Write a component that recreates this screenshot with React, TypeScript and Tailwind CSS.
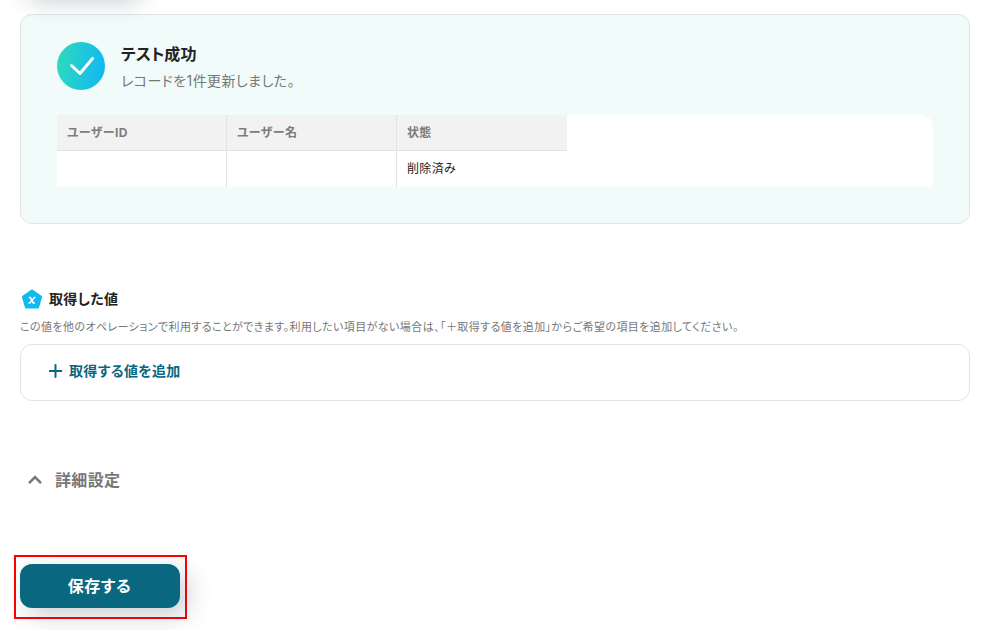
const columns = [
  { label: "ユーザーID", value: "" },
  { label: "ユーザー名", value: "" },
  { label: "状態", value: "削除済み" },
];

function SuccessIcon() {
  return (
    <svg width="48" height="48" viewBox="0 0 48 48" fill="none" className="shrink-0">
      <defs>
        <linearGradient id="success" x1="0" y1="20" x2="48" y2="28" gradientUnits="userSpaceOnUse">
          <stop stopColor="#2fd9bd" />
          <stop offset="1" stopColor="#11b8f2" />
        </linearGradient>
      </defs>
      <circle cx="24" cy="24" r="24" fill="url(#success)" />
      <path d="M14.5 23.5L23 31.5L35.5 16.5" stroke="white" strokeWidth="3" strokeLinecap="round" strokeLinejoin="round" />
    </svg>
  );
}

function ValueIcon() {
  return (
    <svg width="20" height="20" viewBox="0 0 20 20" fill="none" className="shrink-0">
      <path
        d="M10 2L18.5 8L15.6 18H4.4L1.5 8Z"
        fill="#11b9ee"
        stroke="#11b9ee"
        strokeWidth="3"
        strokeLinejoin="round"
      />
      <path d="M6.8 8.5H8.3L11.3 14H12.9" stroke="white" strokeWidth="1.7" />
      <path d="M13.5 8.5H12.4L7.8 14H6.4" stroke="white" strokeWidth="1.4" />
    </svg>
  );
}

export default function App() {
  return (
    <div className="relative h-[630px] overflow-hidden bg-white px-5 pt-3.5 font-['Inter','Noto_Sans_CJK_JP',sans-serif] tracking-[0.02em] text-[#222222] [font-feature-settings:'palt']">
      {/* Test result */}
      <section className="h-[210px] w-[950px] rounded-xl border border-[#e3e3e3] bg-[#f1fbfa] px-9 pt-[27px]">
        <div className="flex h-12 gap-4">
          <SuccessIcon />
          <div>
            <h2 className="text-base leading-6 font-bold tracking-[0.002em]">テスト成功</h2>
            <p className="mt-1 text-sm leading-[22px] tracking-[0.03em] text-[#777777]">レコードを1件更新しました。</p>
          </div>
        </div>
        <div className="mt-[25px] flex h-[72px] w-[876px] rounded-tr-xl bg-white text-xs tracking-[0.03em]">
          {columns.map((column, index) => (
            <div key={column.label} className={`w-[170px] ${index < columns.length - 1 ? "border-r border-[#e3e3e3]" : ""}`}>
              <div className="flex h-9 items-center border-b border-[#e3e3e3] bg-[#f2f2f2] px-2.5 font-bold text-[#7c7c7c]">
                {column.label}
              </div>
              <div className="flex h-9 items-center px-2.5">{column.value}</div>
            </div>
          ))}
        </div>
      </section>

      {/* Output values */}
      <section className="mt-[65px] w-[950px]">
        <div className="flex h-5 items-center gap-[7px] pl-0.5">
          <ValueIcon />
          <h3 className="text-sm leading-5 font-bold">取得した値</h3>
        </div>
        <p className="mt-[9px] text-[11px] leading-[18px] tracking-[0.0375em] whitespace-nowrap text-[#777777]">
          この値を他のオペレーションで利用することができます。利用したい項目がない場合は、「＋取得する値を追加」からご希望の項目を追加してください。
        </p>
        <div className="mt-2 flex h-[57px] items-center rounded-xl border border-[#e3e3e3] px-7 pb-[3px]">
          <button className="flex items-center gap-1.5 text-sm font-bold tracking-[0.025em] text-[#0a6780]">
            <svg width="14" height="14" viewBox="0 0 14 14" stroke="currentColor" strokeWidth="2" strokeLinecap="round">
              <path d="M6.5 1V13M.7 7H12.3" />
            </svg>
            取得する値を追加
          </button>
        </div>
      </section>

      <button className="mt-[67px] ml-2 flex h-6 items-center gap-[13px] text-base font-bold tracking-[0.02em] text-[#777777]">
        <svg width="14" height="14" viewBox="0 0 14 14" fill="none" stroke="currentColor" strokeWidth="2.6">
          <path d="M1 10.2L7 4.2L13 10.2" />
        </svg>
        詳細設定
      </button>

      <div className="mt-[63px] -ml-1.5 h-16 w-[173px] border-2 border-[#ff0000] pt-[7px] pl-1">
        <button className="h-11 w-40 rounded-xl bg-[#0a6780] pr-px text-base font-bold tracking-[0.04em] text-white shadow-[8px_8px_24px_rgba(34,57,72,0.23)]">
          保存する
        </button>
      </div>

      {/* Run button sits just above the visible area, only its shadow reaches in */}
      <div className="absolute -top-[51px] left-5 h-11 w-[114px] rounded-xl shadow-[8px_8px_24px_rgba(34,57,72,0.26)]" />
    </div>
  );
}
